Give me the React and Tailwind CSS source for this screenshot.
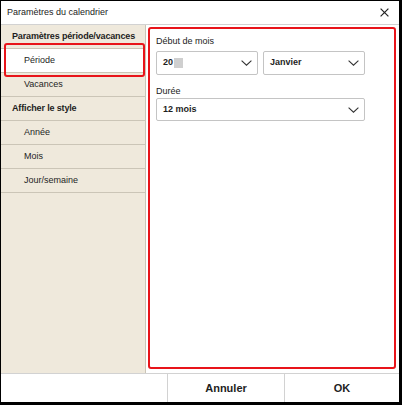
import React from "react";

const font = { fontFamily: '"Liberation Sans", Arial, Helvetica, sans-serif' };

function Chevron() {
  return (
    <svg width="11" height="6" viewBox="0 0 11 6" className="shrink-0">
      <path d="M0.6 0.6 L5.5 5.2 L10.4 0.6" fill="none" stroke="#333" strokeWidth="1.1" />
    </svg>
  );
}

function Select({ className, children }) {
  return (
    <div
      className={
        "flex items-center justify-between rounded-[2px] border border-[#c4c4c4] bg-white pl-[6px] pr-[5px] " +
        className
      }
    >
      <div className="flex items-center text-[9px] font-bold text-[#1e1e1e]">{children}</div>
      <Chevron />
    </div>
  );
}

function SideRow({ children, bold, selected }) {
  return (
    <div
      className={
        "relative flex h-[24px] items-center border-b border-[#cbc5b7] text-[9px] text-[#1e1e1e] " +
        (bold ? "pl-[11px] font-bold tracking-[-0.15px] " : "pl-[23px] ") +
        (selected ? "bg-white" : "")
      }
    >
      {selected && (
        <div className="pointer-events-none absolute left-[3px] right-0 top-[-6px] bottom-[-5px] rounded-[3px] border-2 border-[#e8141a]" />
      )}
      <span>{children}</span>
    </div>
  );
}

export default function App() {
  return (
    <div className="h-[405px] w-[402px] bg-black pl-[1px] pt-[1px]" style={font}>
      <div className="flex h-[401px] w-[398px] flex-col bg-white">
        {/* Title bar */}
        <div className="flex h-[24px] shrink-0 items-center justify-between border-b border-[#d2d2d2] pl-[6px] pr-[10px]">
          <span className="text-[9px] text-[#222]">Paramètres du calendrier</span>
          <svg width="9" height="9" viewBox="0 0 9 9">
            <path d="M0.6 0.6 L8.4 8.4 M8.4 0.6 L0.6 8.4" stroke="#222" strokeWidth="1.2" />
          </svg>
        </div>

        {/* Body */}
        <div className="flex min-h-0 flex-1">
          <div className="w-[145px] shrink-0 border-r border-[#cbc5b7] bg-[#efe9dc]">
            <SideRow bold>Paramètres période/vacances</SideRow>
            <SideRow selected>Période</SideRow>
            <SideRow>Vacances</SideRow>
            <SideRow bold>Afficher le style</SideRow>
            <SideRow>Année</SideRow>
            <SideRow>Mois</SideRow>
            <SideRow>Jour/semaine</SideRow>
          </div>

          <div className="flex-1 pb-[4px] pl-[2px] pr-[3px] pt-[2px]">
            <div className="h-full rounded-[3px] border-2 border-[#e8141a] pl-[6px] pt-[7px]">
              <div className="text-[9px] leading-[11px] text-[#222]">Début de mois</div>
              <div className="mt-[4px] flex gap-[5px]">
                <Select className="h-[24px] w-[102px]">
                  <span>20</span>
                  <span className="ml-[1px] inline-block h-[10px] w-[9px] bg-[#cfcfcf]" />
                </Select>
                <Select className="h-[24px] w-[102px]">
                  <span>Janvier</span>
                </Select>
              </div>
              <div className="mt-[11px] text-[9px] leading-[11px] text-[#222]">Durée</div>
              <div className="mt-[1px]">
                <Select className="h-[23px] w-[209px]">
                  <span>12 mois</span>
                </Select>
              </div>
            </div>
          </div>
        </div>

        {/* Footer */}
        <div className="flex h-[29px] shrink-0 border-t border-[#d2d2d2]">
          <div className="w-[166px]" />
          <div className="flex w-[117px] items-center justify-center border-l border-[#d2d2d2] text-[11px] font-bold text-[#1e1e1e]">
            Annuler
          </div>
          <div className="flex flex-1 items-center justify-center border-l border-[#d2d2d2] text-[11px] font-bold text-[#1e1e1e]">
            OK
          </div>
        </div>
      </div>
    </div>
  );
}
